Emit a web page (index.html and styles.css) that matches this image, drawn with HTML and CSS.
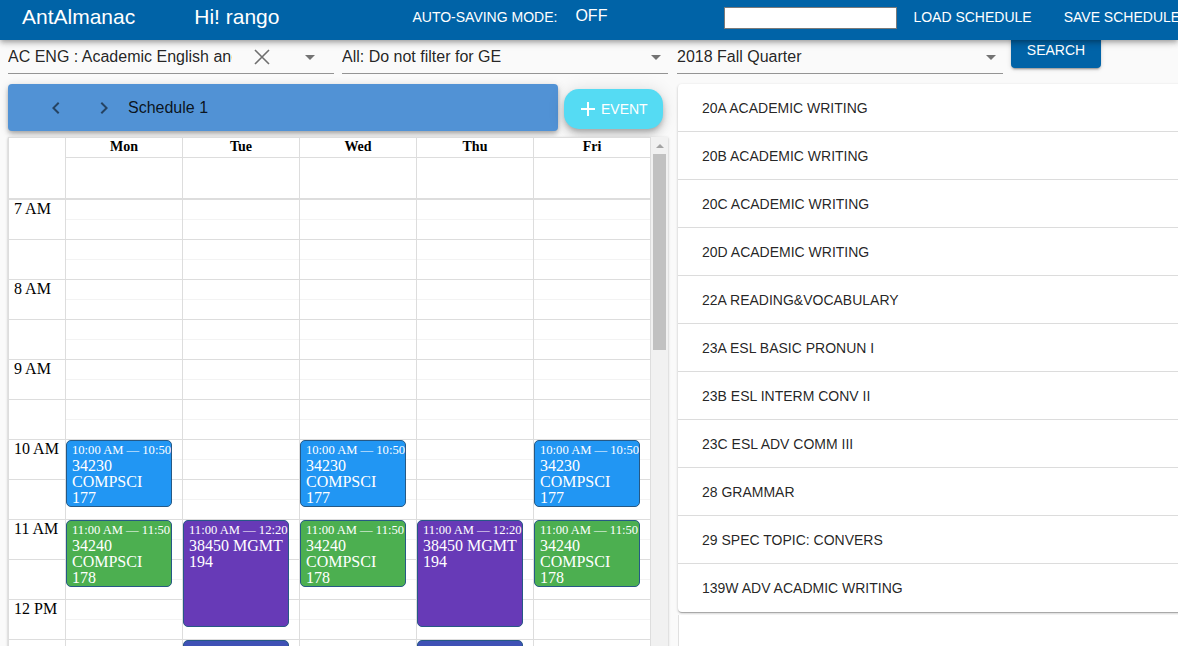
FILE: index.html
```html
<!DOCTYPE html>
<html>
<head>
<meta charset="utf-8">
<title>AntAlmanac</title>
<link rel="stylesheet" href="styles.css">
</head>
<body>
<header class="appbar">
  <div class="brand">AntAlmanac</div>
  <div class="greet">Hi! rango</div>
  <div class="autosave"><span>AUTO-SAVING MODE:</span><span class="off">OFF</span></div>
  <input class="user-input" type="text">
  <button class="hbtn load">LOAD SCHEDULE</button>
  <button class="hbtn save">SAVE SCHEDULE</button>
</header>

<div class="filters">
  <div class="select sel1">
    <span class="sel-text">AC ENG : Academic English and ESL</span>
    <svg class="clear" width="24" height="24" viewBox="0 0 24 24"><path d="M5 5 L19 19 M19 5 L5 19" stroke="#6f6f6f" stroke-width="1.6" fill="none"/></svg>
    <svg class="arrow" width="24" height="24" viewBox="0 0 24 24"><path d="M7 10l5 5 5-5z" fill="rgba(0,0,0,0.54)"/></svg>
  </div>
  <div class="select sel2">
    <span class="sel-text">All: Do not filter for GE</span>
    <svg class="arrow" width="24" height="24" viewBox="0 0 24 24"><path d="M7 10l5 5 5-5z" fill="rgba(0,0,0,0.54)"/></svg>
  </div>
  <div class="select sel3">
    <span class="sel-text">2018 Fall Quarter</span>
    <svg class="arrow" width="24" height="24" viewBox="0 0 24 24"><path d="M7 10l5 5 5-5z" fill="rgba(0,0,0,0.54)"/></svg>
  </div>
  <button class="search">SEARCH</button>
</div>

<div class="main">
  <div class="left">
    <div class="toolbar-row">
      <div class="toolbar">
        <span class="iconbtn"><svg width="24" height="24" viewBox="0 0 24 24"><path d="M15.41 7.41L14 6l-6 6 6 6 1.41-1.41L10.83 12z" fill="rgba(0,0,0,0.54)"/></svg></span>
        <span class="iconbtn"><svg width="24" height="24" viewBox="0 0 24 24"><path d="M10 6L8.59 7.41 13.17 12l-4.58 4.59L10 18l6-6z" fill="rgba(0,0,0,0.54)"/></svg></span>
        <span class="sched-name">Schedule 1</span>
      </div>
      <button class="event-btn">
        <svg width="24" height="24" viewBox="0 0 24 24"><path d="M19 13h-6v6h-2v-6H5v-2h6V5h2v6h6v2z" fill="#fff"/></svg>
        <span>EVENT</span>
      </button>
    </div>

    <div class="cal">
      <div class="cal-grid">
        <div class="cal-head">
          <div class="head-gutter"></div>
          <div class="day-name">Mon</div>
          <div class="day-name">Tue</div>
          <div class="day-name">Wed</div>
          <div class="day-name">Thu</div>
          <div class="day-name">Fri</div>
          <div class="allday"></div>
          <div class="allday"></div>
          <div class="allday"></div>
          <div class="allday"></div>
          <div class="allday"></div>
        </div>
        <div class="cal-body">
          <div class="gutter">
            <div class="hour">7 AM</div>
            <div class="hour">8 AM</div>
            <div class="hour">9 AM</div>
            <div class="hour">10 AM</div>
            <div class="hour">11 AM</div>
            <div class="hour">12 PM</div>
            <div class="hour">1 PM</div>
            <div class="hour">2 PM</div>
          </div>
          <div class="day">
            <div class="ev blue" style="top:240px;height:66.67px"><div class="ev-label">10:00 AM — 10:50 AM</div><div class="ev-body">34230 COMPSCI 177</div></div>
            <div class="ev green" style="top:320px;height:66.67px"><div class="ev-label">11:00 AM — 11:50 AM</div><div class="ev-body">34240 COMPSCI 178</div></div>
          </div>
          <div class="day">
            <div class="ev purple" style="top:320px;height:106.67px"><div class="ev-label">11:00 AM — 12:20 PM</div><div class="ev-body">38450 MGMT 194</div></div>
            <div class="ev indigo" style="top:440px;height:106.67px"><div class="ev-label">12:30 PM — 1:50 PM</div><div class="ev-body">38460 MGMT 195</div></div>
          </div>
          <div class="day">
            <div class="ev blue" style="top:240px;height:66.67px"><div class="ev-label">10:00 AM — 10:50 AM</div><div class="ev-body">34230 COMPSCI 177</div></div>
            <div class="ev green" style="top:320px;height:66.67px"><div class="ev-label">11:00 AM — 11:50 AM</div><div class="ev-body">34240 COMPSCI 178</div></div>
          </div>
          <div class="day">
            <div class="ev purple" style="top:320px;height:106.67px"><div class="ev-label">11:00 AM — 12:20 PM</div><div class="ev-body">38450 MGMT 194</div></div>
            <div class="ev indigo" style="top:440px;height:106.67px"><div class="ev-label">12:30 PM — 1:50 PM</div><div class="ev-body">38460 MGMT 195</div></div>
          </div>
          <div class="day">
            <div class="ev blue" style="top:240px;height:66.67px"><div class="ev-label">10:00 AM — 10:50 AM</div><div class="ev-body">34230 COMPSCI 177</div></div>
            <div class="ev green" style="top:320px;height:66.67px"><div class="ev-label">11:00 AM — 11:50 AM</div><div class="ev-body">34240 COMPSCI 178</div></div>
          </div>
        </div>
      </div>
      <div class="scrollbar">
        <div class="sb-up"><span class="sb-tri"></span></div>
        <div class="sb-thumb"></div>
      </div>
    </div>
  </div>

  <div class="right">
    <div class="list">
      <div class="item">20A ACADEMIC WRITING</div>
      <div class="item">20B ACADEMIC WRITING</div>
      <div class="item">20C ACADEMIC WRITING</div>
      <div class="item">20D ACADEMIC WRITING</div>
      <div class="item">22A READING&amp;VOCABULARY</div>
      <div class="item">23A ESL BASIC PRONUN I</div>
      <div class="item">23B ESL INTERM CONV II</div>
      <div class="item">23C ESL ADV COMM III</div>
      <div class="item">28 GRAMMAR</div>
      <div class="item">29 SPEC TOPIC: CONVERS</div>
      <div class="item">139W ADV ACADMIC WRITING</div>
    </div>
    <div class="list-extra"></div>
  </div>
</div>
</body>
</html>
```

FILE: styles.css
```css
* { box-sizing: border-box; }

html, body {
  margin: 0;
  width: 1178px;
  height: 646px;
  overflow: hidden;
}

body {
  background: #fafafa;
  font-family: "Liberation Sans", Arial, sans-serif;
  color: rgba(0, 0, 0, 0.87);
}

button {
  font-family: inherit;
  border: none;
  cursor: pointer;
}

/* ---------- App bar ---------- */
.appbar {
  position: relative;
  z-index: 2;
  height: 40px;
  background: #0063a7;
  color: #fff;
  display: flex;
  align-items: flex-start;
  padding: 5px 0 0 22px;
  white-space: nowrap;
  box-shadow: 0 2px 4px -1px rgba(0,0,0,0.2), 0 4px 5px 0 rgba(0,0,0,0.14), 0 1px 10px 0 rgba(0,0,0,0.12);
}

.brand, .greet {
  font-size: 21px;
  line-height: 24px;
}

.greet { margin-left: 59px; }

.autosave {
  margin-left: 133px;
  font-size: 14px;
  line-height: 24px;
  display: flex;
}

.off {
  font-size: 16px;
  margin-left: 18px;
  line-height: 22px;
}

.user-input {
  margin-left: 117px;
  margin-top: 2px;
  width: 173px;
  height: 22px;
  border: 1px solid #7a7a7a;
  background: #fff;
  padding: 0;
}

.hbtn {
  background: transparent;
  color: #fff;
  font-size: 14px;
  line-height: 24px;
  padding: 0;
}

.load { margin-left: 16px; }
.save { margin-left: 32px; }

/* ---------- Filters ---------- */
.filters {
  display: flex;
  align-items: flex-start;
  padding-left: 8px;
  height: 44px;
}

.select {
  height: 34px;
  border-bottom: 1px solid #949494;
  display: flex;
  align-items: center;
  padding-top: 1px;
  font-size: 16px;
  flex-shrink: 0;
}

.sel-text {
  white-space: nowrap;
  overflow: hidden;
  color: rgba(0, 0, 0, 0.87);
}

.sel1 { width: 326px; }
.sel1 .sel-text { width: 224px; }
.sel1 .clear { margin-left: 18px; }
.sel1 .arrow { margin-left: 24px; }

.sel2 { width: 326px; margin-left: 8px; justify-content: space-between; }
.sel3 { width: 326px; margin-left: 9px; justify-content: space-between; }

.search {
  margin-left: 8px;
  margin-top: -8px;
  width: 90px;
  height: 36px;
  background: #0063a7;
  color: #fff;
  font-size: 14px;
  border-radius: 4px;
  box-shadow: 0 3px 1px -2px rgba(0,0,0,0.2), 0 2px 2px 0 rgba(0,0,0,0.14), 0 1px 5px 0 rgba(0,0,0,0.12);
  flex-shrink: 0;
}

/* ---------- Main ---------- */
.main {
  display: flex;
  padding-left: 8px;
}

.left {
  width: 660px;
  flex-shrink: 0;
  display: flex;
  flex-direction: column;
}

.toolbar-row {
  display: flex;
  align-items: flex-start;
}

.toolbar {
  width: 550px;
  height: 47px;
  background: #5192d5;
  border-radius: 4px;
  display: flex;
  align-items: center;
  padding-left: 24px;
  box-shadow: 0 2px 4px -1px rgba(0,0,0,0.2), 0 4px 5px 0 rgba(0,0,0,0.14), 0 1px 10px 0 rgba(0,0,0,0.12);
}

.iconbtn {
  width: 48px;
  height: 47px;
  display: flex;
  align-items: center;
  justify-content: center;
}

.sched-name {
  font-size: 16px;
  color: rgba(0, 0, 0, 0.87);
}

.event-btn {
  margin-left: 6px;
  margin-top: 5px;
  width: 99px;
  height: 40px;
  border-radius: 15px;
  background: #55dbf3;
  color: #fff;
  display: flex;
  align-items: center;
  padding: 0 0 0 12px;
  font-size: 14px;
  box-shadow: 0 3px 5px -1px rgba(0,0,0,0.2), 0 6px 10px 0 rgba(0,0,0,0.14), 0 1px 18px 0 rgba(0,0,0,0.12);
}

.event-btn span { margin-left: 1px; }

/* ---------- Calendar ---------- */
.cal {
  margin-top: 6px;
  height: 520px;
  display: flex;
  background: #fff;
  box-shadow: 0 1px 3px 0 rgba(0,0,0,0.2), 0 1px 1px 0 rgba(0,0,0,0.14), 0 2px 1px -1px rgba(0,0,0,0.12);
}

.cal-grid {
  width: 643px;
  border-top: 1px solid #ddd;
  border-left: 1px solid #ddd;
  overflow: hidden;
  font-family: "Liberation Serif", "Times New Roman", serif;
  color: #000;
}

.cal-head {
  display: grid;
  grid-template-columns: 57px repeat(5, 117px);
  grid-template-rows: 20px 40px;
  border-bottom: 2px solid #ddd;
}

.head-gutter {
  grid-row: span 2;
  border-right: 1px solid #ddd;
}

.day-name {
  border-right: 1px solid #ddd;
  border-bottom: 1px solid #ddd;
  text-align: center;
  font-weight: bold;
  font-size: 14px;
  line-height: 17px;
}

.allday {
  border-right: 1px solid #ddd;
}

.cal-body {
  display: grid;
  grid-template-columns: 57px repeat(5, 117px);
  height: 640px;
}

.gutter {
  border-right: 1px solid #ddd;
  background: repeating-linear-gradient(to bottom, transparent 0, transparent 39px, #ddd 39px, #ddd 40px);
}

.hour {
  height: 80px;
  padding-left: 5px;
  font-size: 16px;
  line-height: 18px;
}

.day {
  position: relative;
  border-right: 1px solid #ddd;
  background: repeating-linear-gradient(to bottom,
    transparent 0, transparent 19px,
    #f3f3f3 19px, #f3f3f3 20px,
    transparent 20px, transparent 39px,
    #ddd 39px, #ddd 40px);
}

.ev {
  position: absolute;
  left: 0;
  width: 106px;
  border: 1px solid #265985;
  border-radius: 5px;
  padding: 2px 3px 2px 5px;
  color: #fff;
  overflow: hidden;
}

.ev-label {
  font-size: 12.6px;
  line-height: 15px;
  white-space: nowrap;
}

.ev-body {
  font-size: 16px;
  line-height: 16px;
}

.blue { background: #2196f3; }
.green { background: #4caf50; }
.purple { background: #673ab7; }
.indigo { background: #3f51b5; }

.scrollbar {
  width: 17px;
  background: #f1f1f1;
  display: flex;
  flex-direction: column;
  align-items: center;
}

.sb-up {
  height: 17px;
  display: flex;
  align-items: center;
  justify-content: center;
}

.sb-tri {
  width: 0;
  height: 0;
  border-left: 4px solid transparent;
  border-right: 4px solid transparent;
  border-bottom: 4px solid #a3a3a3;
}

.sb-thumb {
  width: 13px;
  height: 196px;
  background: #c1c1c1;
}

/* ---------- Right list ---------- */
.right {
  margin-left: 10px;
  width: 520px;
  flex-shrink: 0;
}

.list {
  background: #fff;
  border-radius: 4px;
  box-shadow: 0 1px 3px 0 rgba(0,0,0,0.2), 0 1px 1px 0 rgba(0,0,0,0.14), 0 2px 1px -1px rgba(0,0,0,0.12);
}

.item {
  height: 48px;
  padding-left: 24px;
  display: flex;
  align-items: center;
  border-bottom: 1px solid #dcdcdc;
  font-size: 14px;
  color: rgba(0, 0, 0, 0.87);
  white-space: nowrap;
}

.item:last-child { border-bottom: none; }

.list-extra {
  margin-top: 3px;
  height: 100px;
  background: #fff;
  border-left: 1px solid #e0e0e0;
}
```
